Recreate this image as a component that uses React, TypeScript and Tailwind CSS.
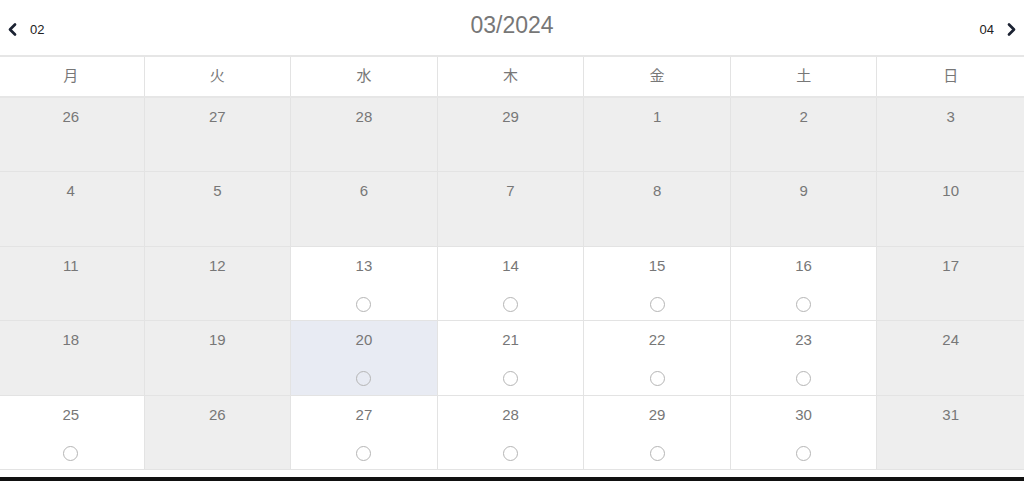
const weekdays = ["月", "火", "水", "木", "金", "土", "日"];

type Day = { n: number; open?: boolean; selected?: boolean };

const days: Day[] = [
  { n: 26 }, { n: 27 }, { n: 28 }, { n: 29 }, { n: 1 }, { n: 2 }, { n: 3 },
  { n: 4 }, { n: 5 }, { n: 6 }, { n: 7 }, { n: 8 }, { n: 9 }, { n: 10 },
  { n: 11 }, { n: 12 }, { n: 13, open: true }, { n: 14, open: true }, { n: 15, open: true }, { n: 16, open: true }, { n: 17 },
  { n: 18 }, { n: 19 }, { n: 20, open: true, selected: true }, { n: 21, open: true }, { n: 22, open: true }, { n: 23, open: true }, { n: 24 },
  { n: 25, open: true }, { n: 26 }, { n: 27, open: true }, { n: 28, open: true }, { n: 29, open: true }, { n: 30, open: true }, { n: 31 },
];

function Chevron({ dir }: { dir: "left" | "right" }) {
  return (
    <svg width="13" height="15" viewBox="0 0 13 15" fill="none">
      <path
        d={dir === "left" ? "M9 2.5 L4 7.5 L9 12.5" : "M4 2.5 L9 7.5 L4 12.5"}
        stroke="#1c2333"
        strokeWidth="2.7"
        strokeLinecap="round"
        strokeLinejoin="round"
      />
    </svg>
  );
}

export default function App() {
  return (
    <main
      className="w-[1024px] h-[481px] bg-white flex flex-col overflow-hidden"
      style={{ fontFamily: '"Liberation Sans", "Noto Sans CJK JP", sans-serif' }}
    >
      <header className="h-[55px] flex items-center justify-between px-[6px]">
        <button className="flex items-center gap-[11px] text-[13px] text-[#222] mt-[4px]">
          <Chevron dir="left" />
          <span>02</span>
        </button>
        <h1 className="text-[23px] text-[#777] -mt-[5px]">03/2024</h1>
        <button className="flex items-center gap-[11px] text-[13px] text-[#222] mt-[4px]">
          <span>04</span>
          <Chevron dir="right" />
        </button>
      </header>

      <div className="border-t-2 border-[#e6e6e6] w-[1026px] -ml-[2px]">
        <div className="grid grid-cols-7 h-[41px] border-b-2 border-[#e6e6e6]">
          {weekdays.map((w, i) => (
            <div
              key={w}
              className={`flex items-center justify-center text-[15px] text-[#777] ${i < 6 ? "border-r border-[#e3e3e3]" : ""}`}
            >
              {w}
            </div>
          ))}
        </div>

        <div className="grid grid-cols-7 grid-rows-5 h-[372px]">
          {days.map((d, i) => {
            const bg = d.selected ? "bg-[#e8ebf3]" : d.open ? "bg-white" : "bg-[#eeeeee]";
            return (
              <div
                key={i}
                className={`flex flex-col items-center pt-[9px] border-b border-[#e3e3e3] ${i % 7 < 6 ? "border-r" : ""} ${bg}`}
              >
                <span className="text-[15px] leading-[20px] text-[#777]">{d.n}</span>
                {d.open && (
                  <span className="mt-[21px] w-[15px] h-[15px] rounded-full border border-[#b5b5b5]" />
                )}
              </div>
            );
          })}
        </div>
      </div>

      <div className="flex-1" />
      <div className="h-[4px] bg-[#111]" />
    </main>
  );
}
